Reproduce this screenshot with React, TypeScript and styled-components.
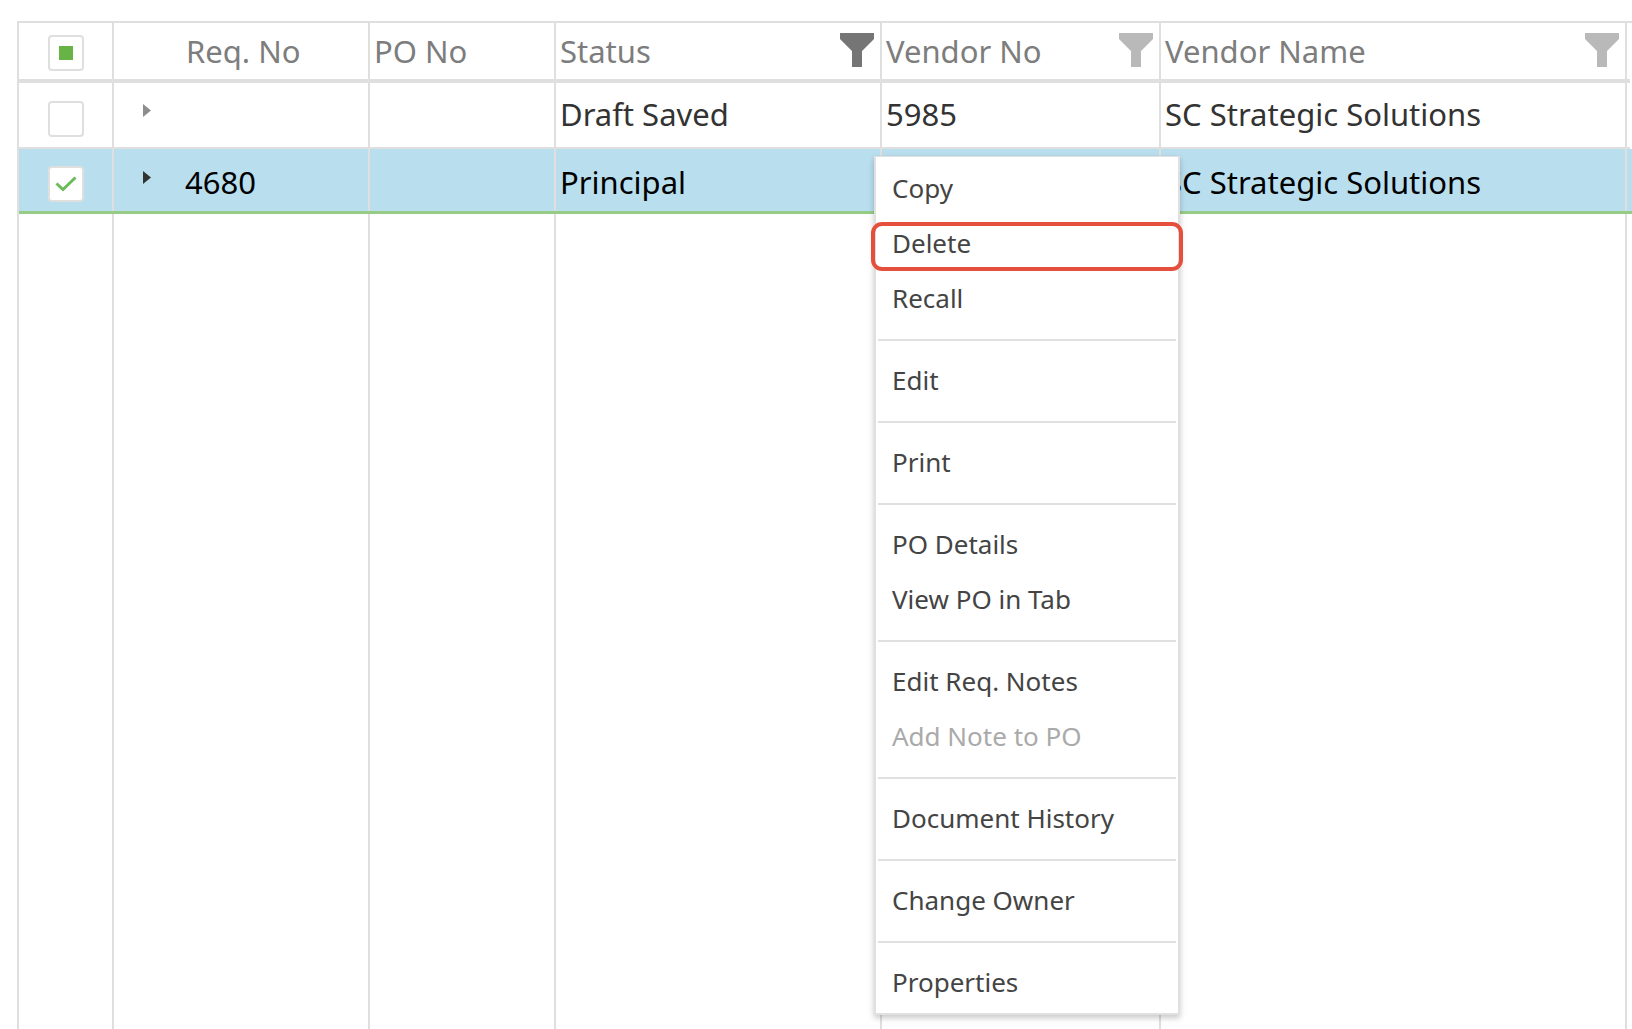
import React, { useEffect, useRef } from "react";
import styled, { createGlobalStyle, css } from "styled-components";

const line = "#dfdfdf";

const GlobalStyle = createGlobalStyle`
  *, *::before, *::after { box-sizing: border-box; }
  body {
    margin: 0;
    background: #fff;
    overflow: hidden;
    font-family: "Noto Sans", "Open Sans", sans-serif;
  }
  button { font: inherit; color: inherit; border: 0; background: none; padding: 0; }
`;

const Page = styled.main`
  position: relative;
  min-height: 100vh;
  padding: 21px 0 0 17px;
`;

const Grid = styled.table`
  width: 100%;
  height: calc(100vh - 21px);
  table-layout: fixed;
  border-collapse: separate;
  border-spacing: 0;
  border-left: 2px solid ${line};
  border-top: 2px solid ${line};
  font-size: 31px;
  line-height: 40px;
`;

const Column = styled.col<{ $width?: number }>`
  width: ${(p) => (p.$width ? `${p.$width}px` : "auto")};
`;

const HeadCell = styled.th`
  height: 60px;
  padding: 0 6px 0 4px;
  border-right: 2px solid ${line};
  border-bottom: 4px solid ${line};
  color: #7d7d7d;
  font-weight: 400;
  text-align: left;
  white-space: nowrap;
  &:last-child { border-right: 0; }
`;

const HeadCheckCell = styled(HeadCell)`
  padding: 4px 0 0;
`;

const HeadContent = styled.div<{ $indent?: boolean }>`
  display: flex;
  align-items: center;
  justify-content: space-between;
  padding-left: ${(p) => (p.$indent ? 68 : 0)}px;
`;

const Row = styled.tr<{ $selected?: boolean }>`
  color: #333;
  ${(p) => p.$selected && css`
    position: relative;
    color: #000;
    background: #b9deee;
    &::after {
      content: "";
      position: absolute;
      inset: auto 0 0;
      height: 3px;
      background: #97cc87;
    }
  `}
`;

const Cell = styled.td<{ $selected?: boolean }>`
  height: ${(p) => (p.$selected ? 65 : 66)}px;
  padding: ${(p) => (p.$selected ? "3px 4px 3px" : "0 4px 2px")};
  border-right: 2px solid ${line};
  border-bottom: ${(p) => (p.$selected ? "0" : `2px solid ${line}`)};
  white-space: nowrap;
  &:last-child { border-right: 0; }
`;

const CheckCell = styled(Cell)`
  padding: ${(p) => (p.$selected ? "7px 0 3px" : "7px 0 0")};
`;

const FillCell = styled.td`
  border-right: 2px solid ${line};
  &:last-child { border-right: 0; }
`;

const ReqContent = styled.div`
  display: flex;
  align-items: center;
  height: 40px;
`;

const Expander = styled.button`
  display: flex;
  width: 67px;
  padding: 0 0 8px 25px;
`;

const FilterButton = styled.button<{ $active?: boolean }>`
  display: flex;
  padding-bottom: 2px;
  color: ${(p) => (p.$active ? "#757575" : "#b9b9b9")};
`;

const CheckLabel = styled.label`
  display: grid;
  place-items: center;
  & > * { grid-area: 1 / 1; }
  svg { pointer-events: none; z-index: 1; }
`;

const CheckInput = styled.input`
  appearance: none;
  width: 36px;
  height: 36px;
  margin: 0;
  border: 2px solid ${line};
  border-radius: 4px;
  background: #fff;
`;

const Menu = styled.div`
  position: absolute;
  z-index: 2;
  top: 156px;
  left: 874px;
  width: 306px;
  padding: 4px 0 3px;
  border: 2px solid #e0e0e0;
  border-top-width: 1px;
  background: #fff;
  box-shadow: 0 3px 6px rgba(0, 0, 0, 0.22);
  font-size: 26px;
  line-height: 55px;
`;

const MenuItem = styled.button<{ $marked?: boolean }>`
  position: relative;
  display: block;
  width: 100%;
  height: 55px;
  padding-left: 16px;
  color: #444;
  text-align: left;
  white-space: nowrap;
  &:disabled { color: #aaa; }
  ${(p) => p.$marked && css`
    &::after {
      content: "";
      position: absolute;
      inset: 6px -5px 0;
      border: 4px solid #e5503c;
      border-radius: 11px;
    }
  `}
`;

const Divider = styled.hr`
  height: 2px;
  margin: 13px 2px 12px;
  border: 0;
  background: #e0e0e0;
`;

function Funnel() {
  return (
    <svg width="34" height="34" viewBox="0 0 34 34" fill="currentColor" aria-hidden="true">
      <path d="M0 0H34V6L22 18V34H12V18L0 6Z" />
    </svg>
  );
}

function Check({ label, state }: { label: string; state: "on" | "off" | "mixed" }) {
  const ref = useRef<HTMLInputElement>(null);
  useEffect(() => {
    if (ref.current) ref.current.indeterminate = state === "mixed";
  }, [state]);
  return (
    <CheckLabel>
      <CheckInput ref={ref} type="checkbox" aria-label={label} defaultChecked={state === "on"} />
      {state === "mixed" && (
        <svg width="14" height="14" aria-hidden="true"><rect width="14" height="14" fill="#67b346" /></svg>
      )}
      {state === "on" && (
        <svg width="22" height="16" viewBox="0 0 22 16" fill="none" aria-hidden="true">
          <path d="M1.5 7.5L8 13.5L20.5 1.5" stroke="#6cbb5a" strokeWidth="3" />
        </svg>
      )}
    </CheckLabel>
  );
}

const columns = [
  { name: "Req. No", width: 256, indent: true },
  { name: "PO No", width: 186 },
  { name: "Status", width: 326, filter: "active" },
  { name: "Vendor No", width: 279, filter: "idle" },
  { name: "Vendor Name", width: 466, filter: "idle" },
];

const rows = [
  { req: "", po: "", status: "Draft Saved", vendorNo: "5985", vendor: "SC Strategic Solutions", selected: false },
  { req: "4680", po: "", status: "Principal", vendorNo: "", vendor: "SC Strategic Solutions", selected: true },
];

const menuGroups = [
  ["Copy", "Delete", "Recall"],
  ["Edit"],
  ["Print"],
  ["PO Details", "View PO in Tab"],
  ["Edit Req. Notes", "Add Note to PO"],
  ["Document History"],
  ["Change Owner"],
  ["Properties"],
];

export default function App() {
  return (
    <Page>
      <GlobalStyle />
      <Grid>
        <colgroup>
          <Column $width={95} />
          {columns.map((c) => <Column key={c.name} $width={c.width} />)}
          <Column />
        </colgroup>
        <thead>
          <tr>
            <HeadCheckCell>
              <Check label="Select all rows" state="mixed" />
            </HeadCheckCell>
            {columns.map((c) => (
              <HeadCell key={c.name} scope="col">
                <HeadContent $indent={c.indent}>
                  {c.name}
                  {c.filter && (
                    <FilterButton type="button" aria-label={`Filter ${c.name}`} $active={c.filter === "active"}>
                      <Funnel />
                    </FilterButton>
                  )}
                </HeadContent>
              </HeadCell>
            ))}
            <HeadCell />
          </tr>
        </thead>
        <tbody>
          {rows.map((r, i) => (
            <Row key={i} $selected={r.selected}>
              <CheckCell $selected={r.selected}>
                <Check label={`Select row ${i + 1}`} state={r.selected ? "on" : "off"} />
              </CheckCell>
              <Cell $selected={r.selected}>
                <ReqContent>
                  <Expander type="button" aria-label={`Expand row ${i + 1}`}>
                    <svg width="8" height="13" viewBox="0 0 8 13" aria-hidden="true">
                      <path d="M0 0L8 6.5L0 13Z" fill={r.selected ? "#333" : "#8d8d8d"} />
                    </svg>
                  </Expander>
                  {r.req}
                </ReqContent>
              </Cell>
              <Cell $selected={r.selected}>{r.po}</Cell>
              <Cell $selected={r.selected}>{r.status}</Cell>
              <Cell $selected={r.selected}>{r.vendorNo}</Cell>
              <Cell $selected={r.selected}>{r.vendor}</Cell>
              <Cell $selected={r.selected} />
            </Row>
          ))}
          <tr>
            <FillCell />
            {columns.map((c) => <FillCell key={c.name} />)}
            <FillCell />
          </tr>
        </tbody>
      </Grid>
      <Menu role="menu">
        {menuGroups.map((group, g) => (
          <React.Fragment key={g}>
            {g > 0 && <Divider />}
            {group.map((item) => (
              <MenuItem
                key={item}
                type="button"
                role="menuitem"
                $marked={item === "Delete"}
                disabled={item === "Add Note to PO"}
              >
                {item}
              </MenuItem>
            ))}
          </React.Fragment>
        ))}
      </Menu>
    </Page>
  );
}
